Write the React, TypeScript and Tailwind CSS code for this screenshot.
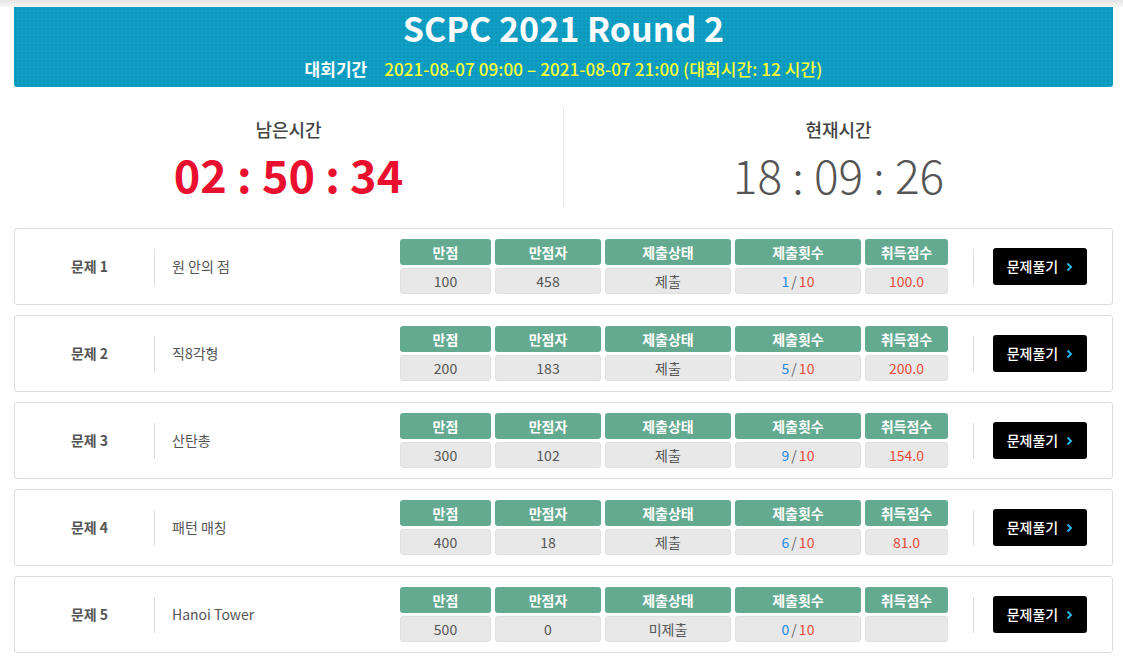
import React from "react";

type Row = {
  no: number;
  title: string;
  full: number;
  fullCnt: number;
  status: string;
  tries: number;
  score: string;
};

const rows: Row[] = [
  { no: 1, title: "원 안의 점", full: 100, fullCnt: 458, status: "제출", tries: 1, score: "100.0" },
  { no: 2, title: "직8각형", full: 200, fullCnt: 183, status: "제출", tries: 5, score: "200.0" },
  { no: 3, title: "산탄총", full: 300, fullCnt: 102, status: "제출", tries: 9, score: "154.0" },
  { no: 4, title: "패턴 매칭", full: 400, fullCnt: 18, status: "제출", tries: 6, score: "81.0" },
  { no: 5, title: "Hanoi Tower", full: 500, fullCnt: 0, status: "미제출", tries: 0, score: "" },
];

function Cell({ w, head, children }: { w: string; head: string; children: React.ReactNode }) {
  return (
    <div className={`flex flex-col gap-[3px] ${w}`}>
      <div className="h-[26px] rounded-[3px] bg-[#64aa91] text-white font-bold text-[14px] flex items-center justify-center leading-none">
        {head}
      </div>
      <div className="h-[26px] rounded-[3px] bg-[#e8e8e8] border border-[#e0e0e0] text-[#555] text-[14px] flex items-center justify-center leading-none">
        {children}
      </div>
    </div>
  );
}

function Card({ r }: { r: Row }) {
  return (
    <div className="h-[77px] border border-[#dcdcdc] rounded-[3px] bg-white flex items-center">
      <div className="w-[139px] pl-[10px] flex justify-center text-[14px] font-bold text-[#555]">문제 {r.no}</div>
      <div className="w-px h-[36px] bg-[#dddddd]" />
      <div className="flex-1 pl-[17px] text-[14px] text-[#555]">{r.title}</div>
      <div className="flex gap-[4px]">
        <Cell w="w-[91px]" head="만점">{r.full}</Cell>
        <Cell w="w-[106px]" head="만점자">{r.fullCnt}</Cell>
        <Cell w="w-[126px]" head="제출상태">{r.status}</Cell>
        <Cell w="w-[126px]" head="제출횟수">
          <span className="text-[#1e88e5]">{r.tries}</span>
          <span className="text-[#666] px-[2px]">/</span>
          <span className="text-[#e74c3c]">10</span>
        </Cell>
        <Cell w="w-[83px]" head="취득점수">
          <span className="text-[#e74c3c]">{r.score}</span>
        </Cell>
      </div>
      <div className="ml-[25px] w-px h-[36px] bg-[#dddddd]" />
      <div className="ml-[19px] mr-[25px] w-[94px] h-[37px] rounded-[3px] bg-black text-white text-[14px] font-medium flex items-center justify-center gap-[8px]">
        <span>문제풀기</span>
        <svg width="7" height="10" viewBox="0 0 7 10" className="mt-[1px]">
          <path d="M1.5 1.5 L5 5 L1.5 8.5" stroke="#2bb5e8" strokeWidth="2" fill="none" />
        </svg>
      </div>
    </div>
  );
}

export default function App() {
  return (
    <div className="w-[1123px] h-[664px] overflow-hidden bg-white font-['Noto_Sans_CJK_KR','Noto_Sans',sans-serif]">
      <div className="h-[7px] bg-gradient-to-b from-[#e4e4e4] to-[#f8f8f8]" />
      <div className="pl-[14px] pr-[10px]">
        <div className="h-[80px] rounded-b-[3px] bg-[#0f9fc4] bg-[radial-gradient(circle,rgba(0,0,0,0.07)_0.8px,transparent_1px)] bg-[length:4px_4px] flex flex-col items-center">
          <div className="mt-[1px] text-white font-bold text-[34px] leading-[40px]">SCPC 2021 Round 2</div>
          <div className="mt-[11px] flex items-center text-[17px] leading-[20px]">
            <span className="text-white font-bold">대회기간</span>
            <span className="ml-[17px] text-[#ffff33] font-medium tracking-[0.1px]">2021-08-07 09:00 – 2021-08-07 21:00 (대회시간: 12 시간)</span>
          </div>
        </div>

        <div className="mt-[21px] mb-[21px] h-[99px] flex">
          <div className="flex-1 flex flex-col items-center">
            <div className="mt-[9px] text-[18px] font-medium text-[#444] leading-[24px]">남은시간</div>
            <div className="mt-[9px] text-[45px] font-bold text-[#e8102e] leading-[48px]">02 : 50 : 34</div>
          </div>
          <div className="w-px bg-[#e6e6e6]" />
          <div className="flex-1 flex flex-col items-center">
            <div className="mt-[9px] text-[18px] font-medium text-[#444] leading-[24px]">현재시간</div>
            <div className="mt-[10px] text-[46px] font-light text-[#555] leading-[47px]">18 : 09 : 26</div>
          </div>
        </div>

        <div className="flex flex-col gap-[10px]">
          {rows.map((r) => (
            <Card key={r.no} r={r} />
          ))}
        </div>
      </div>
    </div>
  );
}
